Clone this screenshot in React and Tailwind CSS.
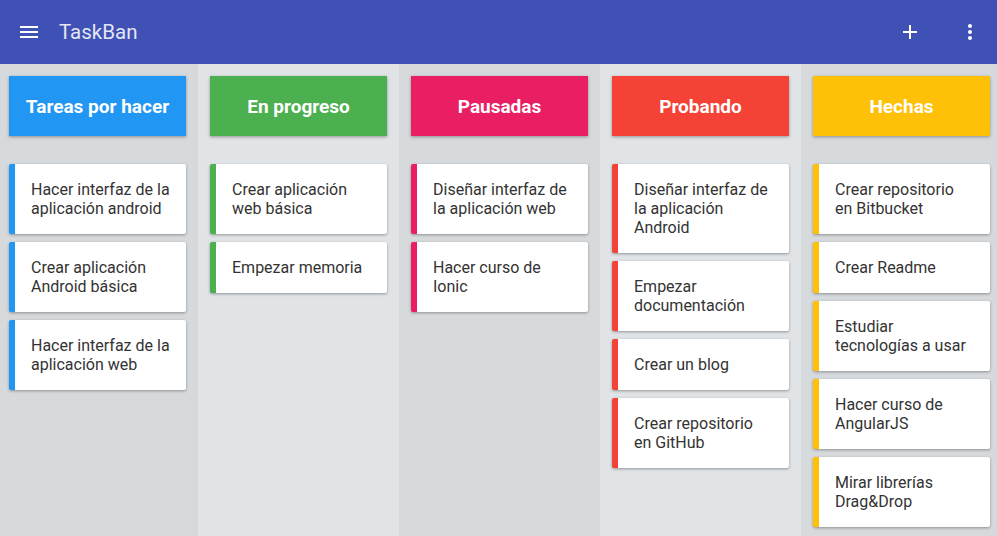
import React from "react";

const columns = [
  {
    title: "Tareas por hacer",
    head: "bg-[#2196F3]",
    border: "border-[#2196F3]",
    bg: "bg-[#d7dadd]",
    cards: [
      ["Hacer interfaz de la", "aplicación android"],
      ["Crear aplicación", "Android básica"],
      ["Hacer interfaz de la", "aplicación web"],
    ],
  },
  {
    title: "En progreso",
    head: "bg-[#4CAF50]",
    border: "border-[#4CAF50]",
    bg: "bg-[#e0e4e7]",
    cards: [["Crear aplicación", "web básica"], ["Empezar memoria"]],
  },
  {
    title: "Pausadas",
    head: "bg-[#E91E63]",
    border: "border-[#E91E63]",
    bg: "bg-[#d7dadd]",
    cards: [
      ["Diseñar interfaz de", "la aplicación web"],
      ["Hacer curso de", "Ionic"],
    ],
  },
  {
    title: "Probando",
    head: "bg-[#F44336]",
    border: "border-[#F44336]",
    bg: "bg-[#e0e4e7]",
    cards: [
      ["Diseñar interfaz de", "la aplicación", "Android"],
      ["Empezar", "documentación"],
      ["Crear un blog"],
      ["Crear repositorio", "en GitHub"],
    ],
  },
  {
    title: "Hechas",
    head: "bg-[#FFC107]",
    border: "border-[#FFC107]",
    bg: "bg-[#d7dadd]",
    cards: [
      ["Crear repositorio", "en Bitbucket"],
      ["Crear Readme"],
      ["Estudiar", "tecnologías a usar"],
      ["Hacer curso de", "AngularJS"],
      ["Mirar librerías", "Drag&Drop"],
    ],
  },
];

export default function App() {
  return (
    <div
      className="w-[997px] h-[536px] overflow-hidden flex flex-col bg-[#d7dadd]"
      style={{ fontFamily: "Roboto, 'Noto Sans', sans-serif" }}
    >
      <header className="h-16 shrink-0 bg-[#3F51B5] flex items-center pl-[17px] pr-[15px]">
        <svg width="24" height="24" viewBox="0 0 24 24" fill="#fff">
          <path d="M3 18h18v-2H3v2zm0-5h18v-2H3v2zm0-7v2h18V6H3z" />
        </svg>
        <span className="ml-[18px] text-[20.5px] text-[#e4e6f4] leading-none">TaskBan</span>
        <div className="ml-auto flex items-center gap-[36px]">
          <svg width="24" height="24" viewBox="0 0 24 24" fill="#fff">
            <path d="M19 13h-6v6h-2v-6H5v-2h6V5h2v6h6v2z" />
          </svg>
          <svg width="24" height="24" viewBox="0 0 24 24" fill="#fff">
            <path d="M12 8c1.1 0 2-.9 2-2s-.9-2-2-2-2 .9-2 2 .9 2 2 2zm0 2c-1.1 0-2 .9-2 2s.9 2 2 2 2-.9 2-2-.9-2-2-2zm0 6c-1.1 0-2 .9-2 2s.9 2 2 2 2-.9 2-2-.9-2-2-2z" />
          </svg>
        </div>
      </header>
      <main className="flex flex-1 ml-[-3px] overflow-hidden">
        {columns.map((col) => (
          <section key={col.title} className={`w-[201px] shrink-0 ${col.bg} px-3 pt-3`}>
            <div
              className={`${col.head} h-[60px] pt-[2px] flex items-center justify-center text-white font-bold text-[19px] shadow-[0_1px_3px_rgba(0,0,0,0.35)]`}
            >
              {col.title}
            </div>
            <div className="mt-7 flex flex-col gap-2">
              {col.cards.map((lines, i) => (
                <div
                  key={i}
                  className={`bg-white border-l-[6px] ${col.border} rounded-[2px] pl-4 pr-2 py-4 text-[16px] leading-[19px] text-[#333] shadow-[0_1px_3px_rgba(0,0,0,0.35)]`}
                >
                  {lines.map((l, j) => (
                    <div key={j} className="whitespace-nowrap">
                      {l}
                    </div>
                  ))}
                </div>
              ))}
            </div>
          </section>
        ))}
      </main>
    </div>
  );
}
